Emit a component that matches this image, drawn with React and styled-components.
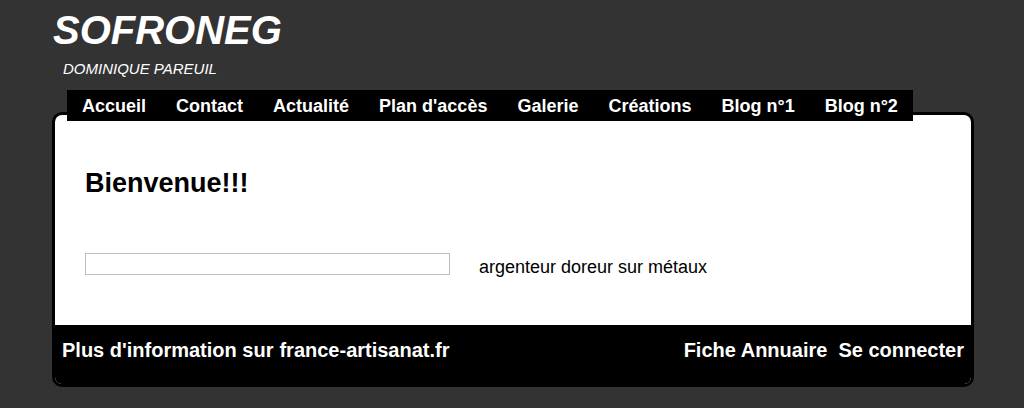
import React from 'react';
import styled, { createGlobalStyle } from 'styled-components';

const GlobalStyle = createGlobalStyle`
  body {
    margin: 0;
    background: #333333;
    font-family: "Liberation Sans", Arial, sans-serif;
  }
`;

const Page = styled.div`
  padding: 7px 50px 21px 52px;
`;

const SiteTitle = styled.h1`
  margin: 0;
  padding-left: 1px;
  font-size: 40px;
  line-height: 46px;
  font-weight: bold;
  font-style: italic;
  color: #fff;
`;

const SubTitle = styled.div`
  margin: 7px 0 0 11px;
  font-size: 15px;
  line-height: 18px;
  font-style: italic;
  color: #fff;
`;

const Nav = styled.ul`
  position: relative;
  z-index: 1;
  display: flex;
  width: max-content;
  list-style: none;
  margin: 12px 0 0 15px;
  padding: 1px 0 0 0;
  background: #000;
`;

const NavItem = styled.li`
  padding: 0 15px;
  font-size: 18px;
  line-height: 30px;
  font-weight: bold;
  color: #fff;
  white-space: nowrap;
`;

const Frame = styled.div`
  margin-top: -9px;
  border: 3px solid #000;
  border-radius: 10px;
  overflow: hidden;
  background: #fff;
`;

const Content = styled.div`
  padding: 52px 30px 47px 30px;
`;

const Heading = styled.h2`
  margin: 0;
  font-size: 27px;
  line-height: 32px;
  font-weight: bold;
  color: #000;
`;

const Row = styled.div`
  display: flex;
  align-items: flex-start;
  gap: 29px;
  margin-top: 54px;
`;

const Field = styled.div`
  width: 363px;
  height: 20px;
  border: 1px solid #c0c0c0;
`;

const Label = styled.span`
  margin-top: 4px;
  font-size: 18px;
  line-height: 21px;
  color: #000;
`;

const Footer = styled.div`
  display: flex;
  justify-content: space-between;
  padding: 14px 7px 22px 7px;
  background: #000;
`;

const FooterGroup = styled.div`
  display: flex;
  gap: ${(p) => p.$gap}px;
`;

const FooterLink = styled.span`
  font-size: 20px;
  line-height: 23px;
  font-weight: bold;
  color: #fff;
  white-space: nowrap;
`;

const navItems = [
  'Accueil',
  'Contact',
  'Actualité',
  "Plan d'accès",
  'Galerie',
  'Créations',
  'Blog n°1',
  'Blog n°2',
];

export default function App() {
  return (
    <>
      <GlobalStyle />
      <Page>
        <SiteTitle>SOFRONEG</SiteTitle>
        <SubTitle>DOMINIQUE PAREUIL</SubTitle>
        <Nav>
          {navItems.map((item) => (
            <NavItem key={item}>{item}</NavItem>
          ))}
        </Nav>
        <Frame>
          <Content>
            <Heading>Bienvenue!!!</Heading>
            <Row>
              <Field />
              <Label>argenteur doreur sur métaux</Label>
            </Row>
          </Content>
          <Footer>
            <FooterGroup $gap={6}>
              <FooterLink>Plus d'information sur</FooterLink>
              <FooterLink>france-artisanat.fr</FooterLink>
            </FooterGroup>
            <FooterGroup $gap={11}>
              <FooterLink>Fiche Annuaire</FooterLink>
              <FooterLink>Se connecter</FooterLink>
            </FooterGroup>
          </Footer>
        </Frame>
      </Page>
    </>
  );
}
